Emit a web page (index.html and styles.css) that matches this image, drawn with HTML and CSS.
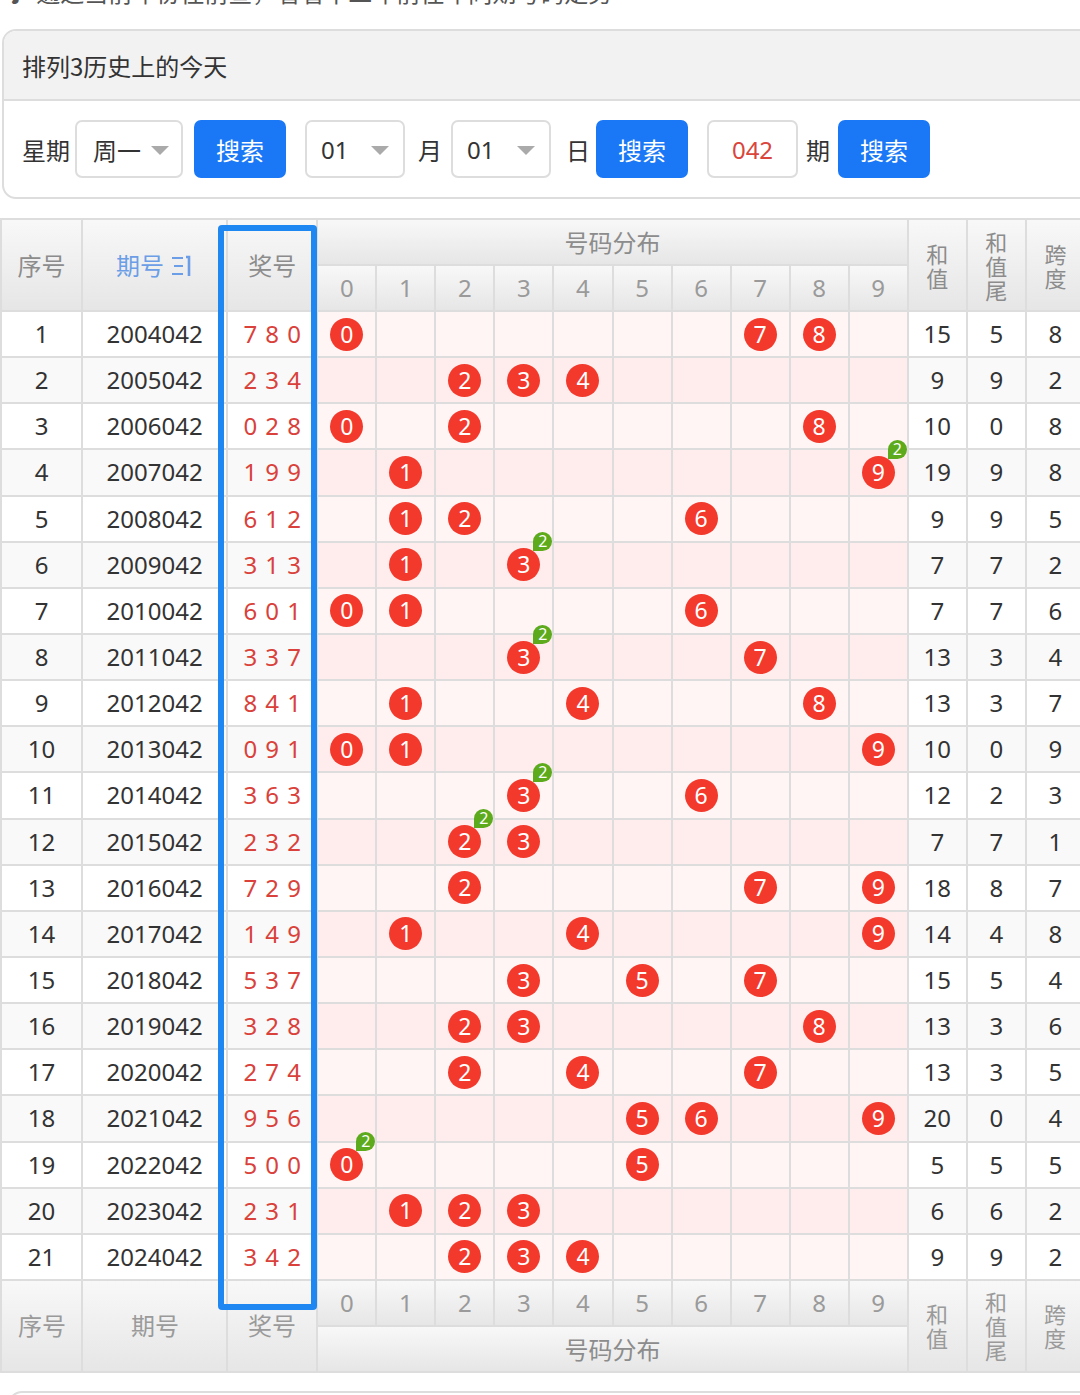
FILE: index.html
```html
<!DOCTYPE html>
<html lang="zh-CN">
<head>
<meta charset="utf-8">
<title>排列3历史上的今天</title>
<link rel="stylesheet" href="styles.css">
</head>
<body>
<div class="topline">♪ 通过当前年份往前查，看看十二年前往年同期号码走势</div>

<div class="panel">
  <div class="panel-hd">排列3历史上的今天</div>
  <div class="panel-bd">
    <span class="lbl">星期</span>
    <span class="sel sel-week">周一<i class="caret"></i></span>
    <span class="btn m-btn1">搜索</span>
    <span class="sel sel-num m-sel2">01<i class="caret"></i></span>
    <span class="lbl m-mon">月</span>
    <span class="sel sel-num m-sel3">01<i class="caret"></i></span>
    <span class="lbl m-day">日</span>
    <span class="btn m-btn2">搜索</span>
    <span class="inp m-inp">042</span>
    <span class="lbl m-qi">期</span>
    <span class="btn m-btn3">搜索</span>
  </div>
</div>

<div class="wrap">
<table class="chart">
<colgroup>
<col class="c-no"><col class="c-issue"><col class="c-win">
<col class="c-d"><col class="c-d"><col class="c-d"><col class="c-d"><col class="c-d"><col class="c-d"><col class="c-d"><col class="c-d"><col class="c-d"><col class="c-d">
<col class="c-d"><col class="c-d"><col class="c-d">
</colgroup>
<thead>
<tr class="hrow">
<th rowspan="2">序号</th>
<th rowspan="2" class="sort">期号 <svg class="sort-ic" width="22" height="24" viewBox="0 0 22 24"><path d="M1 4h11M3 12h9M1 20h11" stroke="#6b9ee6" stroke-width="2.2" fill="none"/><path d="M15 3h3v19" stroke="#6b9ee6" stroke-width="2.6" fill="none"/></svg></th>
<th rowspan="2">奖号</th>
<th colspan="10">号码分布</th>
<th rowspan="2"><span class="vt">和值</span></th>
<th rowspan="2"><span class="vt">和值尾</span></th>
<th rowspan="2"><span class="vt">跨度</span></th>
</tr>
<tr class="hrow dig">
<th>0</th><th>1</th><th>2</th><th>3</th><th>4</th><th>5</th><th>6</th><th>7</th><th>8</th><th>9</th>
</tr>
</thead>
<tbody>
<tr class="odd"><td>1</td><td>2004042</td><td class="win">7 8 0</td><td class="d"><i class="ball">0</i></td><td class="d"></td><td class="d"></td><td class="d"></td><td class="d"></td><td class="d"></td><td class="d"></td><td class="d"><i class="ball">7</i></td><td class="d"><i class="ball">8</i></td><td class="d"></td><td>15</td><td>5</td><td>8</td></tr>
<tr class="even"><td>2</td><td>2005042</td><td class="win">2 3 4</td><td class="d"></td><td class="d"></td><td class="d"><i class="ball">2</i></td><td class="d"><i class="ball">3</i></td><td class="d"><i class="ball">4</i></td><td class="d"></td><td class="d"></td><td class="d"></td><td class="d"></td><td class="d"></td><td>9</td><td>9</td><td>2</td></tr>
<tr class="odd"><td>3</td><td>2006042</td><td class="win">0 2 8</td><td class="d"><i class="ball">0</i></td><td class="d"></td><td class="d"><i class="ball">2</i></td><td class="d"></td><td class="d"></td><td class="d"></td><td class="d"></td><td class="d"></td><td class="d"><i class="ball">8</i></td><td class="d"></td><td>10</td><td>0</td><td>8</td></tr>
<tr class="even"><td>4</td><td>2007042</td><td class="win">1 9 9</td><td class="d"></td><td class="d"><i class="ball">1</i></td><td class="d"></td><td class="d"></td><td class="d"></td><td class="d"></td><td class="d"></td><td class="d"></td><td class="d"></td><td class="d"><i class="ball">9<b class="tag">2</b></i></td><td>19</td><td>9</td><td>8</td></tr>
<tr class="odd"><td>5</td><td>2008042</td><td class="win">6 1 2</td><td class="d"></td><td class="d"><i class="ball">1</i></td><td class="d"><i class="ball">2</i></td><td class="d"></td><td class="d"></td><td class="d"></td><td class="d"><i class="ball">6</i></td><td class="d"></td><td class="d"></td><td class="d"></td><td>9</td><td>9</td><td>5</td></tr>
<tr class="even"><td>6</td><td>2009042</td><td class="win">3 1 3</td><td class="d"></td><td class="d"><i class="ball">1</i></td><td class="d"></td><td class="d"><i class="ball">3<b class="tag">2</b></i></td><td class="d"></td><td class="d"></td><td class="d"></td><td class="d"></td><td class="d"></td><td class="d"></td><td>7</td><td>7</td><td>2</td></tr>
<tr class="odd"><td>7</td><td>2010042</td><td class="win">6 0 1</td><td class="d"><i class="ball">0</i></td><td class="d"><i class="ball">1</i></td><td class="d"></td><td class="d"></td><td class="d"></td><td class="d"></td><td class="d"><i class="ball">6</i></td><td class="d"></td><td class="d"></td><td class="d"></td><td>7</td><td>7</td><td>6</td></tr>
<tr class="even"><td>8</td><td>2011042</td><td class="win">3 3 7</td><td class="d"></td><td class="d"></td><td class="d"></td><td class="d"><i class="ball">3<b class="tag">2</b></i></td><td class="d"></td><td class="d"></td><td class="d"></td><td class="d"><i class="ball">7</i></td><td class="d"></td><td class="d"></td><td>13</td><td>3</td><td>4</td></tr>
<tr class="odd"><td>9</td><td>2012042</td><td class="win">8 4 1</td><td class="d"></td><td class="d"><i class="ball">1</i></td><td class="d"></td><td class="d"></td><td class="d"><i class="ball">4</i></td><td class="d"></td><td class="d"></td><td class="d"></td><td class="d"><i class="ball">8</i></td><td class="d"></td><td>13</td><td>3</td><td>7</td></tr>
<tr class="even"><td>10</td><td>2013042</td><td class="win">0 9 1</td><td class="d"><i class="ball">0</i></td><td class="d"><i class="ball">1</i></td><td class="d"></td><td class="d"></td><td class="d"></td><td class="d"></td><td class="d"></td><td class="d"></td><td class="d"></td><td class="d"><i class="ball">9</i></td><td>10</td><td>0</td><td>9</td></tr>
<tr class="odd"><td>11</td><td>2014042</td><td class="win">3 6 3</td><td class="d"></td><td class="d"></td><td class="d"></td><td class="d"><i class="ball">3<b class="tag">2</b></i></td><td class="d"></td><td class="d"></td><td class="d"><i class="ball">6</i></td><td class="d"></td><td class="d"></td><td class="d"></td><td>12</td><td>2</td><td>3</td></tr>
<tr class="even"><td>12</td><td>2015042</td><td class="win">2 3 2</td><td class="d"></td><td class="d"></td><td class="d"><i class="ball">2<b class="tag">2</b></i></td><td class="d"><i class="ball">3</i></td><td class="d"></td><td class="d"></td><td class="d"></td><td class="d"></td><td class="d"></td><td class="d"></td><td>7</td><td>7</td><td>1</td></tr>
<tr class="odd"><td>13</td><td>2016042</td><td class="win">7 2 9</td><td class="d"></td><td class="d"></td><td class="d"><i class="ball">2</i></td><td class="d"></td><td class="d"></td><td class="d"></td><td class="d"></td><td class="d"><i class="ball">7</i></td><td class="d"></td><td class="d"><i class="ball">9</i></td><td>18</td><td>8</td><td>7</td></tr>
<tr class="even"><td>14</td><td>2017042</td><td class="win">1 4 9</td><td class="d"></td><td class="d"><i class="ball">1</i></td><td class="d"></td><td class="d"></td><td class="d"><i class="ball">4</i></td><td class="d"></td><td class="d"></td><td class="d"></td><td class="d"></td><td class="d"><i class="ball">9</i></td><td>14</td><td>4</td><td>8</td></tr>
<tr class="odd"><td>15</td><td>2018042</td><td class="win">5 3 7</td><td class="d"></td><td class="d"></td><td class="d"></td><td class="d"><i class="ball">3</i></td><td class="d"></td><td class="d"><i class="ball">5</i></td><td class="d"></td><td class="d"><i class="ball">7</i></td><td class="d"></td><td class="d"></td><td>15</td><td>5</td><td>4</td></tr>
<tr class="even"><td>16</td><td>2019042</td><td class="win">3 2 8</td><td class="d"></td><td class="d"></td><td class="d"><i class="ball">2</i></td><td class="d"><i class="ball">3</i></td><td class="d"></td><td class="d"></td><td class="d"></td><td class="d"></td><td class="d"><i class="ball">8</i></td><td class="d"></td><td>13</td><td>3</td><td>6</td></tr>
<tr class="odd"><td>17</td><td>2020042</td><td class="win">2 7 4</td><td class="d"></td><td class="d"></td><td class="d"><i class="ball">2</i></td><td class="d"></td><td class="d"><i class="ball">4</i></td><td class="d"></td><td class="d"></td><td class="d"><i class="ball">7</i></td><td class="d"></td><td class="d"></td><td>13</td><td>3</td><td>5</td></tr>
<tr class="even"><td>18</td><td>2021042</td><td class="win">9 5 6</td><td class="d"></td><td class="d"></td><td class="d"></td><td class="d"></td><td class="d"></td><td class="d"><i class="ball">5</i></td><td class="d"><i class="ball">6</i></td><td class="d"></td><td class="d"></td><td class="d"><i class="ball">9</i></td><td>20</td><td>0</td><td>4</td></tr>
<tr class="odd"><td>19</td><td>2022042</td><td class="win">5 0 0</td><td class="d"><i class="ball">0<b class="tag">2</b></i></td><td class="d"></td><td class="d"></td><td class="d"></td><td class="d"></td><td class="d"><i class="ball">5</i></td><td class="d"></td><td class="d"></td><td class="d"></td><td class="d"></td><td>5</td><td>5</td><td>5</td></tr>
<tr class="even"><td>20</td><td>2023042</td><td class="win">2 3 1</td><td class="d"></td><td class="d"><i class="ball">1</i></td><td class="d"><i class="ball">2</i></td><td class="d"><i class="ball">3</i></td><td class="d"></td><td class="d"></td><td class="d"></td><td class="d"></td><td class="d"></td><td class="d"></td><td>6</td><td>6</td><td>2</td></tr>
<tr class="odd"><td>21</td><td>2024042</td><td class="win">3 4 2</td><td class="d"></td><td class="d"></td><td class="d"><i class="ball">2</i></td><td class="d"><i class="ball">3</i></td><td class="d"><i class="ball">4</i></td><td class="d"></td><td class="d"></td><td class="d"></td><td class="d"></td><td class="d"></td><td>9</td><td>9</td><td>2</td></tr>
</tbody>
<tfoot>
<tr class="hrow dig">
<th rowspan="2">序号</th>
<th rowspan="2">期号</th>
<th rowspan="2">奖号</th>
<th>0</th><th>1</th><th>2</th><th>3</th><th>4</th><th>5</th><th>6</th><th>7</th><th>8</th><th>9</th>
<th rowspan="2"><span class="vt">和值</span></th>
<th rowspan="2"><span class="vt">和值尾</span></th>
<th rowspan="2"><span class="vt">跨度</span></th>
</tr>
<tr class="hrow">
<th colspan="10">号码分布</th>
</tr>
</tfoot>
</table>
<div class="hilite"></div>
</div>

<div class="next-panel"></div>
</body>
</html>
```

FILE: styles.css
```css
html, body {
  margin: 0;
  padding: 0;
  background: #fff;
  overflow: hidden;
}
body {
  width: 1080px;
  font-family: "Noto Sans", "Noto Sans CJK SC", sans-serif;
  color: #333;
}
.topline {
  margin-top: -22px;
  height: 30px;
  line-height: 30px;
  padding-left: 6px;
  font-size: 24px;
  color: #555;
  white-space: nowrap;
  overflow: hidden;
}
.panel {
  margin: 21px -40px 0 2px;
  border: 2px solid #ddd;
  border-radius: 14px;
  overflow: hidden;
}
.panel-hd {
  height: 68px;
  background: #f2f2f2;
  border-bottom: 2px solid #ddd;
  display: flex;
  align-items: center;
  padding-left: 18px;
  font-size: 24px;
  color: #333;
  font-family: "Noto Sans CJK SC", sans-serif;
}
.panel-bd {
  height: 96px;
  display: flex;
  align-items: center;
  padding-left: 18px;
}
.lbl {
  font-size: 24px;
  color: #333;
  font-family: "Noto Sans CJK SC", sans-serif;
}
.sel, .inp, .btn {
  box-sizing: border-box;
  height: 58px;
  border-radius: 7px;
  display: flex;
  align-items: center;
  font-size: 24px;
}
.sel {
  border: 2px solid #ddd;
  color: #333;
  position: relative;
  font-family: "Noto Sans", "Noto Sans CJK SC", sans-serif;
}
.sel-week {
  width: 108px;
  margin-left: 5px;
  padding-left: 16px;
}
.sel-num {
  width: 100px;
  padding-left: 14px;
}
.caret {
  position: absolute;
  top: 24px;
  width: 0;
  height: 0;
  border-left: 9px solid transparent;
  border-right: 9px solid transparent;
  border-top: 9px solid #aaa;
}
.sel-week .caret { left: 74px; }
.sel-num .caret { left: 64px; }
.btn {
  width: 92px;
  background: #1a78f6;
  color: #fff;
  justify-content: center;
  font-family: "Noto Sans CJK SC", sans-serif;
}
.inp {
  width: 91px;
  border: 2px solid #ddd;
  color: #d9453b;
  justify-content: center;
}
.m-btn1 { margin-left: 11px; }
.m-sel2 { margin-left: 19px; }
.m-mon { margin-left: 13px; }
.m-sel3 { margin-left: 9px; }
.m-day { margin-left: 15px; }
.m-btn2 { margin-left: 6px; }
.m-inp { margin-left: 19px; }
.m-qi { margin-left: 8px; }
.m-btn3 { margin-left: 8px; }

.wrap {
  position: relative;
  margin-top: 19px;
}
.chart {
  border-collapse: collapse;
  table-layout: fixed;
  width: 1086px;
}
.c-no { width: 81px; }
.c-issue { width: 145px; }
.c-win { width: 90px; }
.c-d { width: 59px; }
.chart th, .chart td {
  border: 2px solid #ddd;
  padding: 0;
  text-align: center;
  vertical-align: middle;
}
.chart th {
  background: linear-gradient(#f8f8f8, #e6e6e6);
  color: #8c8c8c;
  font-weight: normal;
  font-size: 24px;
  line-height: 28px;
  font-family: "Noto Sans CJK SC", sans-serif;
}
.hrow { height: 46px; }
.hrow.dig th {
  color: #9a9a9a;
  font-family: "Noto Sans", sans-serif;
}
.chart th.sort {
  color: #6b9ee6;
}
.sort-ic {
  vertical-align: -3px;
  margin-left: 2px;
}
.vt {
  display: block;
  width: 24px;
  margin: 0 auto;
  font-size: 22px;
  line-height: 24px;
}
.chart tbody tr {
  height: 46.15px;
}
.chart td {
  font-size: 24px;
  line-height: 26px;
  color: #333;
}
.chart td.d {
  font-size: 0;
  line-height: 0;
}
.odd td { background: #fff; }
.even td { background: #f9f9f9; }
.odd td.d { background: #fff5f4; }
.even td.d { background: #ffecec; }
.chart td.win {
  color: #d9413a;
  word-spacing: 2px;
}
.ball {
  display: inline-block;
  position: relative;
  width: 33px;
  height: 33px;
  border-radius: 50%;
  background: #f3392c;
  color: #fff;
  font-style: normal;
  font-size: 23px;
  line-height: 33px;
  vertical-align: middle;
}
.tag {
  position: absolute;
  left: 26px;
  top: -16px;
  width: 19px;
  height: 19px;
  border-radius: 50% 50% 50% 0;
  background: #5dab1c;
  color: #fff;
  font-weight: normal;
  font-size: 16px;
  line-height: 19px;
}
.hilite {
  position: absolute;
  left: 218px;
  top: 7px;
  width: 99px;
  height: 1085px;
  box-sizing: border-box;
  border: 6px solid #1e87f2;
  border-radius: 4px;
}
.next-panel {
  margin: 18px -40px 0 8px;
  height: 40px;
  border: 2px solid #ddd;
  border-radius: 14px;
}
```
